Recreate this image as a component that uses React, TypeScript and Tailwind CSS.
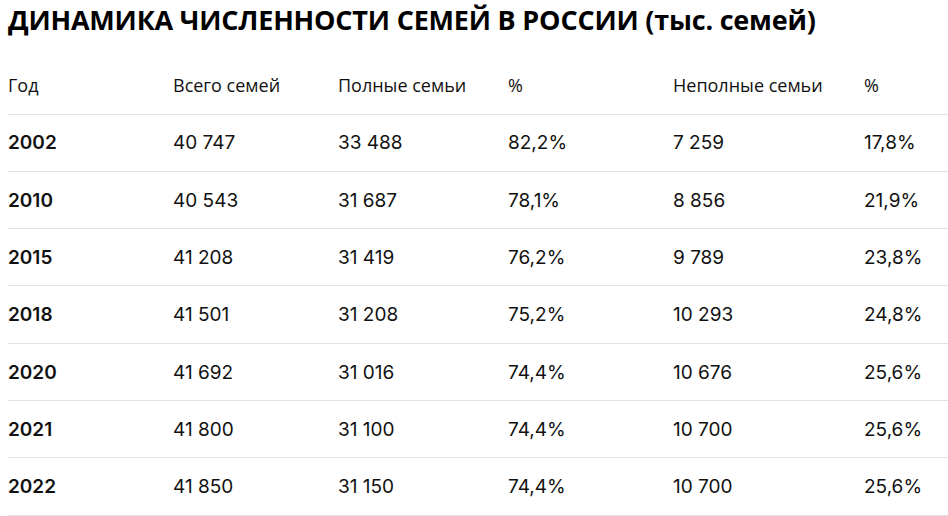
const headers = ['Год', 'Всего семей', 'Полные семьи', '%', 'Неполные семьи', '%'];

const rows = [
  ['2002', '40 747', '33 488', '82,2%', '7 259', '17,8%'],
  ['2010', '40 543', '31 687', '78,1%', '8 856', '21,9%'],
  ['2015', '41 208', '31 419', '76,2%', '9 789', '23,8%'],
  ['2018', '41 501', '31 208', '75,2%', '10 293', '24,8%'],
  ['2020', '41 692', '31 016', '74,4%', '10 676', '25,6%'],
  ['2021', '41 800', '31 100', '74,4%', '10 700', '25,6%'],
  ['2022', '41 850', '31 150', '74,4%', '10 700', '25,6%'],
];

const widths = ['w-[165px]', 'w-[165px]', 'w-[170px]', 'w-[165px]', 'w-[191px]', 'w-[84px]'];

export default function App() {
  return (
    <div className="w-[948px] h-[516px] overflow-hidden bg-white pl-2 text-[#111]">
      <h1 className="h-[41px] pt-[1px] text-[27px] leading-[38px] font-bold tracking-[-0.2px] text-black font-['Open_Sans',sans-serif] whitespace-nowrap">
        ДИНАМИКА ЧИСЛЕННОСТИ СЕМЕЙ В РОССИИ (тыс. семей)
      </h1>
      <table className="table-fixed w-[940px] border-collapse mt-[17px]">
        <thead>
          <tr className="h-[56px] border-b border-[#e3e3e3]">
            {headers.map((h, i) => (
              <th
                key={i}
                className={`${widths[i]} p-0 text-left font-normal text-[18px] font-['Open_Sans',sans-serif] text-[#111]`}
              >
                {h}
              </th>
            ))}
          </tr>
        </thead>
        <tbody>
          {rows.map((r) => (
            <tr key={r[0]} className="h-[57.3px] border-b border-[#e3e3e3]">
              {r.map((c, i) => (
                <td
                  key={i}
                  className={`p-0 pt-[2px] text-[19px] font-['Inter',sans-serif] ${i === 0 ? 'font-semibold' : 'font-normal'}`}
                >
                  {c}
                </td>
              ))}
            </tr>
          ))}
        </tbody>
      </table>
    </div>
  );
}
